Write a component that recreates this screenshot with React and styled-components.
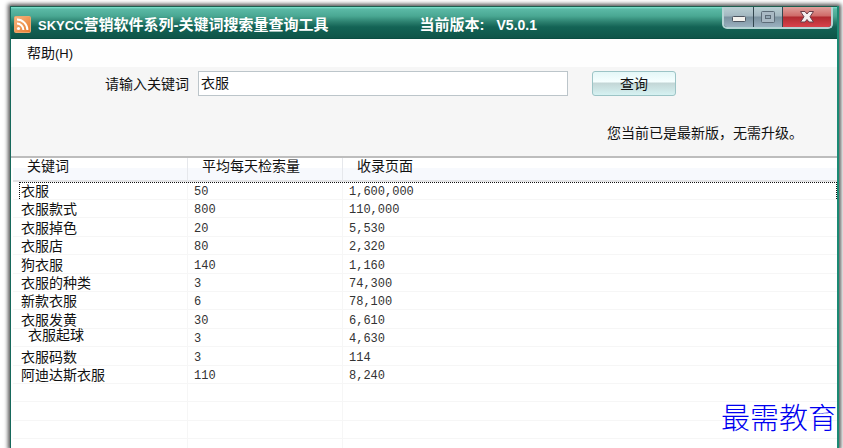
import React, { useState } from 'react';
import styled, { createGlobalStyle } from 'styled-components';

const GlobalStyle = createGlobalStyle`
  * {
    box-sizing: border-box;
  }

  body {
    margin: 0;
    overflow: hidden;
    background: #ffffff;
    color: #111111;
    font-family: 'Liberation Sans', 'Noto Sans CJK SC', sans-serif;
    font-size: 14px;
    line-height: 18px;
  }

  button,
  input {
    font: inherit;
    color: inherit;
  }
`;

const Desktop = styled.div`
  height: 100vh;
  padding: 6px 4px 0 10px;
`;

const Window = styled.main`
  position: relative;
  height: 100%;
  display: flex;
  flex-direction: column;
  border-left: 1px solid #17695c;
  border-right: 2px solid #1a8a74;
  box-shadow: 0 0 4px 2px #555555;
`;

const TitleBar = styled.header`
  display: flex;
  align-items: flex-start;
  height: 33px;
  flex: none;
  padding: 0 4px 0 3px;
  border-top: 1px solid #1c5f50;
  border-bottom: 1px solid #0b4d42;
  background: linear-gradient(
    #7fe6cf 0,
    #5bb9a6 2px,
    #4aa893 9px,
    #2b7f6e 15px,
    #136355 20px,
    #0f5549 100%
  );
  color: #ffffff;
`;

const AppIcon = styled.svg`
  width: 17px;
  height: 17px;
  flex: none;
  margin-top: 9px;
`;

const Title = styled.h1`
  margin: 8px 0 0 7px;
  font-size: 15px;
  line-height: 20px;
  font-weight: 700;
  white-space: nowrap;
`;

const Latin = styled.span`
  font-size: ${({ $large }) => ($large ? '14px' : '13px')};
`;

const Version = styled.p`
  display: flex;
  align-items: baseline;
  gap: 12px;
  margin: 8px auto 0 91px;
  font-size: 15px;
  line-height: 20px;
  font-weight: 700;
  white-space: nowrap;
`;

const WindowControls = styled.div`
  display: flex;
  flex: none;
  height: 22px;
  border: 2px solid #b5d3d4;
  border-top: 0;
  border-radius: 0 0 5px 5px;
  overflow: hidden;
`;

const ControlButton = styled.button`
  display: grid;
  place-items: center;
  width: ${({ $close }) => ($close ? '49px' : '29px')};
  padding: 0;
  border: 0;
  border-left: ${({ $first }) => ($first ? '0' : '1px solid #33474f')};
  background: ${({ $close }) =>
    $close
      ? 'linear-gradient(#e0a09c 0, #cf6a68 9px, #b02a30 10px, #d8424c 100%)'
      : 'linear-gradient(#b9cfd3 0, #a3b7c0 9px, #7b929f 10px, #9ab0bf 100%)'};
`;

const MenuBar = styled.nav`
  display: flex;
  align-items: center;
  flex: none;
  height: 28px;
  padding: 0 0 0 16px;
  background: #fefefe;
`;

const MenuButton = styled.button`
  padding: 0;
  border: 0;
  background: none;
`;

const SearchPanel = styled.section`
  flex: none;
  height: 91px;
  border-bottom: 2px solid #bdbdbd;
  background: #f6f6f6;
`;

const SearchForm = styled.form`
  display: flex;
  align-items: center;
  padding: 4px 161px 0 94px;
`;

const KeywordInput = styled.input`
  flex: 1;
  min-width: 0;
  height: 25px;
  margin: 0 24px 0 9px;
  padding: 0 2px 4px;
  border: 1px solid #bcc5ca;
  background: #ffffff;
  outline: none;
`;

const SearchButton = styled.button`
  width: 84px;
  height: 25px;
  padding: 0;
  border: 1px solid #9cc4c6;
  border-radius: 3px;
  background: linear-gradient(#e4f7f7 0, #f6ffff 10px, #c3d6d6 11px, #d6f2f2 100%);
`;

const Notice = styled.p`
  margin: 28px 34px 0 0;
  text-align: right;
`;

const ListArea = styled.section`
  flex: 1;
  min-height: 0;
  overflow: hidden;
  padding-left: 2px;
  background: #ffffff;
`;

const KeywordTable = styled.table`
  width: 100%;
  table-layout: fixed;
  border-collapse: separate;
  border-spacing: 0;
`;

const HeadCell = styled.th`
  width: ${({ $width }) => $width || 'auto'};
  padding: 0 0 6px 14px;
  border-bottom: 2px solid #e2e2e4;
  border-right: 1px solid #e6e8ec;
  background: linear-gradient(#ffffff 10px, #f7f9fd 10px);
  font-weight: 400;
  line-height: 16px;
  text-align: left;

  &:last-child {
    border-right: 0;
  }
`;

const Row = styled.tr`
  position: relative;
  height: 18px;

  /* two rows in five are a pixel taller */
  &:nth-child(5n),
  &:nth-child(5n + 3) {
    height: 19px;
  }
`;

const Cell = styled.td`
  padding: 3px 0 0 6px;
  border-bottom: 1px solid #f6f6f6;
  border-right: 1px solid #f6f6f6;
  color: #333333;
  font-family: 'Liberation Mono', monospace;
  font-size: 12px;
  line-height: 14px;
  white-space: nowrap;

  &:last-child {
    border-right: 0;
  }
`;

const KeywordCell = styled(Cell)`
  padding: ${({ $shifted }) => ($shifted ? '0 0 4px 15px' : '1px 0 0 8px')};
  color: #111111;
  font-family: 'Liberation Sans', 'Noto Sans CJK SC', sans-serif;
  font-size: 14px;
  line-height: ${({ $shifted }) => ($shifted ? '13px' : '16px')};
`;

const FocusFrame = styled.span`
  position: absolute;
  inset: 0 0 1px 6px;
  border: 1px dotted #111111;
  border-bottom: 0;
  pointer-events: none;
`;

const Watermark = styled.span`
  position: absolute;
  right: 0;
  bottom: 14px;
  color: #0000f0;
  font-family: 'Noto Sans CJK SC', sans-serif;
  font-size: 29px;
  font-weight: 300;
  line-height: 36px;
`;

const rows = [
  { keyword: '衣服', searches: '50', pages: '1,600,000', focused: true },
  { keyword: '衣服款式', searches: '800', pages: '110,000' },
  { keyword: '衣服掉色', searches: '20', pages: '5,530' },
  { keyword: '衣服店', searches: '80', pages: '2,320' },
  { keyword: '狗衣服', searches: '140', pages: '1,160' },
  { keyword: '衣服的种类', searches: '3', pages: '74,300' },
  { keyword: '新款衣服', searches: '6', pages: '78,100' },
  { keyword: '衣服发黄', searches: '30', pages: '6,610' },
  { keyword: '衣服起球', searches: '3', pages: '4,630', shifted: true },
  { keyword: '衣服码数', searches: '3', pages: '114' },
  { keyword: '阿迪达斯衣服', searches: '110', pages: '8,240' },
  {},
  {},
  {},
  {},
];

const RssIcon = () => (
  <AppIcon viewBox="0 0 17 17" aria-hidden="true">
    <defs>
      <linearGradient id="rss" x1="0" y1="0" x2="1" y2="1">
        <stop offset="0" stopColor="#f6b884" />
        <stop offset="1" stopColor="#e8792c" />
      </linearGradient>
    </defs>
    <rect x="0.5" y="0.5" width="16" height="16" rx="1" fill="url(#rss)" stroke="#eda56c" />
    <circle cx="4.5" cy="12.5" r="1.6" fill="#ffffff" />
    <path
      d="M3 7.6a6.4 6.4 0 0 1 6.4 6.4M3 3.6A10.4 10.4 0 0 1 13.4 14"
      fill="none"
      stroke="#ffffff"
      strokeWidth="2"
    />
  </AppIcon>
);

const MinimizeIcon = () => (
  <svg width="16" height="16" viewBox="0 0 16 16" aria-hidden="true">
    <rect x="1.5" y="7.5" width="13" height="5" rx="1" fill="#f4f2ee" stroke="#4d5560" />
  </svg>
);

const MaximizeIcon = () => (
  <svg width="16" height="16" viewBox="0 0 16 16" aria-hidden="true">
    <rect x="1.5" y="2.5" width="13" height="11" rx="1" fill="#a9b9c4" stroke="#5d6c78" />
    <rect x="5.5" y="6.5" width="5" height="3" fill="#93a7b4" stroke="#5d6c78" />
  </svg>
);

const CloseIcon = () => (
  <svg width="16" height="16" viewBox="0 0 16 16" aria-hidden="true">
    <path
      d="M1.5 2.5H6L8 5l2-2.5h4.500L11 7.800l3.500 5.200H10l-2-2.500L6 13H1.500L5 7.800z"
      fill="#f5efef"
      stroke="#6a3c48"
      strokeLinejoin="round"
    />
  </svg>
);

const App = () => {
  const [keyword, setKeyword] = useState('衣服');

  return (
    <>
      <GlobalStyle />
      <Desktop>
        <Window>
          <TitleBar>
            <RssIcon />
            <Title>
              <Latin>SKYCC</Latin>营销软件系列-关键词搜索量查询工具
            </Title>
            <Version>
              <span>当前版本:</span>
              <Latin $large>V5.0.1</Latin>
            </Version>
            <WindowControls>
              <ControlButton type="button" aria-label="最小化" $first>
                <MinimizeIcon />
              </ControlButton>
              <ControlButton type="button" aria-label="最大化">
                <MaximizeIcon />
              </ControlButton>
              <ControlButton type="button" aria-label="关闭" $close>
                <CloseIcon />
              </ControlButton>
            </WindowControls>
          </TitleBar>
          <MenuBar>
            <MenuButton type="button">
              帮助<Latin>(H)</Latin>
            </MenuButton>
          </MenuBar>
          <SearchPanel>
            <SearchForm onSubmit={(e) => e.preventDefault()}>
              <label htmlFor="keyword">请输入关键词</label>
              <KeywordInput
                id="keyword"
                type="text"
                value={keyword}
                onChange={(e) => setKeyword(e.target.value)}
              />
              <SearchButton type="submit">查询</SearchButton>
            </SearchForm>
            <Notice>您当前已是最新版，无需升级。</Notice>
          </SearchPanel>
          <ListArea>
            <KeywordTable>
              <thead>
                <tr>
                  <HeadCell $width="175px">关键词</HeadCell>
                  <HeadCell $width="155px">平均每天检索量</HeadCell>
                  <HeadCell>收录页面</HeadCell>
                </tr>
              </thead>
              <tbody>
                {rows.map((row, index) => (
                  <Row key={index}>
                    <KeywordCell $shifted={row.shifted}>
                      {row.keyword}
                      {row.focused && <FocusFrame />}
                    </KeywordCell>
                    <Cell>{row.searches}</Cell>
                    <Cell>{row.pages}</Cell>
                  </Row>
                ))}
              </tbody>
            </KeywordTable>
          </ListArea>
          <Watermark>最需教育</Watermark>
        </Window>
      </Desktop>
    </>
  );
};

export default App;
